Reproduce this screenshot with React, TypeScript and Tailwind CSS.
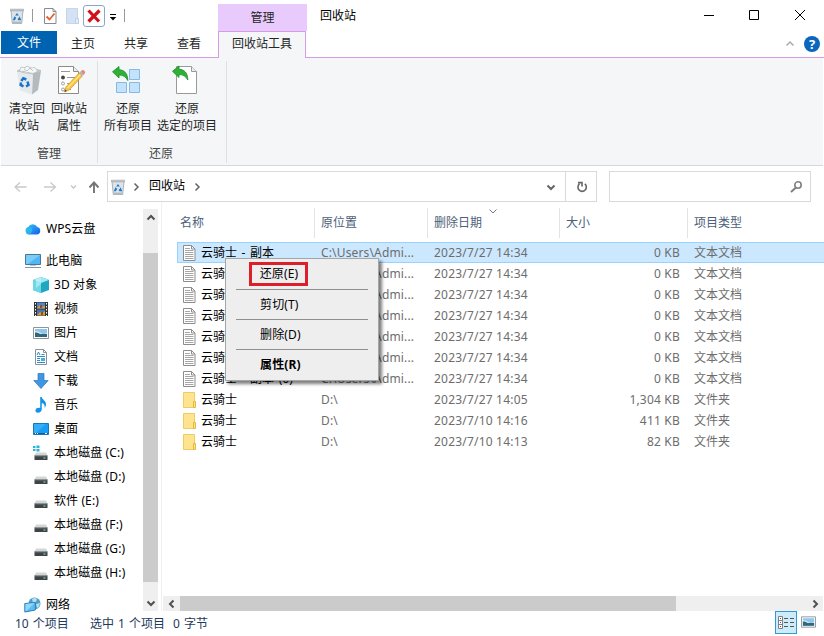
import type { ReactNode } from "react";
import clsx from "clsx";

interface FileItem {
  name: string;
  location: string;
  date: string;
  size: string;
  type: string;
  kind: "text" | "folder";
}

const textFile = (name: string): FileItem => ({
  name,
  location: "C:\\Users\\Admi...",
  date: "2023/7/27 14:34",
  size: "0 KB",
  type: "文本文档",
  kind: "text",
});

const folder = (date: string, size: string): FileItem => ({
  name: "云骑士",
  location: "D:\\",
  date,
  size,
  type: "文件夹",
  kind: "folder",
});

const files: FileItem[] = [
  textFile("云骑士 - 副本"),
  textFile("云骑士 - 副本 (2)"),
  textFile("云骑士 - 副本 (3)"),
  textFile("云骑士 - 副本 (4)"),
  textFile("云骑士 - 副本 (5)"),
  textFile("云骑士 - 副本 (7)"),
  textFile("云骑士 - 副本 (6)"),
  folder("2023/7/27 14:05", "1,304 KB"),
  folder("2023/7/10 14:16", "411 KB"),
  folder("2023/7/10 14:13", "82 KB"),
];

function BinIcon() {
  return (
    <svg width="16" height="16" viewBox="0 0 16 16">
      <path d="M2 2.500 3.300 15.500h9.400L14 2.500z" fill="#dde3e8" stroke="#9aa3aa" strokeWidth=".8" />
      <path d="M1.500 1.200h13v1.600h-13z" fill="#d3d9dd" stroke="#8f989f" strokeWidth=".6" />
      <path d="M3.200 13.500h9.600v2H3.300z" fill="#b3bbc1" />
      <path d="M6.200 7.600 8 5l1.800 2.600z" fill="#1b78c8" />
      <path d="m5.500 8.300 1.700 1.500-1.300 2.400H3.800z" fill="#1b78c8" />
      <path d="m10.500 8.300 1.800 3.900H9.500l-1-1.200 1.200-1z" fill="#1b78c8" />
    </svg>
  );
}

function FullBinIcon() {
  return (
    <svg width="26" height="30" viewBox="0 0 26 30" className="ml-[3px]">
      <path d="m1 6 16 3-1 20.500L4 25.500z" fill="#e6e9eb" />
      <path d="m17 9 8-3-3 19-6 4.500z" fill="#b4babe" />
      <path d="m1 6 9-4 15 3.500L17 9z" fill="#c9cdd0" stroke="#a6adb2" strokeWidth=".6" />
      <path d="m3.500 6 1.500-4 4 1 2-2 4 2 4-.5 1.500 2.500 2 1-5.500 2.500-5-1-3 .5z" fill="#f7f8f8" stroke="#b5babd" strokeWidth=".7" />
      <path d="m8 4 3 2 3-3 3 3M6 6l4 1" fill="none" stroke="#a4aaae" strokeWidth=".7" />
      <path
        d="m5.300 16 2-2.800 3 1.300M11.500 16.500l1 3.500-2.500 1.500M7.500 21.300l-2.800-1.300.2-2.500"
        fill="none"
        stroke="#1674d1"
        strokeWidth="2.500"
      />
    </svg>
  );
}

function PropertiesIcon() {
  return (
    <svg width="28" height="30" viewBox="0 0 28 30" className="ml-[5px]">
      <path d="M.5 1.500h15l5 5v22H.5z" fill="#fff" stroke="#8b8b8b" />
      <path d="M15.500 1.500v5h5" fill="#eee" stroke="#8b8b8b" />
      <path d="M3 6.500h9M9 12.500h8M9 18.500h6M9 24.500h4" stroke="#999" />
      <circle cx="5" cy="12.500" r="1.900" fill="#444" />
      <circle cx="5" cy="18.500" r="1.500" fill="#fff" stroke="#888" strokeWidth=".8" />
      <circle cx="5" cy="24.500" r="1.500" fill="#fff" stroke="#888" strokeWidth=".8" />
      <path d="m6.500 27 1.300-5L21 8l3.300 3-13 14z" fill="#f9c440" stroke="#d58a16" strokeWidth=".6" />
      <path d="M9.500 23 22.500 9.500" stroke="#ffe48a" strokeWidth="1.300" />
      <path d="m22.500 6.500 1.500-1.300q1.500-.7 2.800 1 .8 1.500-.1 2.500l-1.200 1.200z" fill="#e68a7e" />
      <path d="m21 8 1.500-1.500 3.200 3L24.300 11z" fill="#aeb4ba" />
      <path d="m6.500 27 .7-2.500 1.700 1.500z" fill="#444" />
    </svg>
  );
}

function GreenArrow() {
  return (
    <path
      d="M.5 5.800 7 .5v3.200c5.500.3 8.700 3.600 8.800 10.800-2-3.800-4.600-5.400-8.800-5.500v3z"
      fill="#2eb135"
      stroke="#178d24"
      strokeWidth=".8"
      strokeLinejoin="round"
    />
  );
}

function RestoreAllIcon() {
  return (
    <svg width="30" height="30" viewBox="0 0 30 30" className="-ml-[2px]">
      <g fill="#c3e2fb" stroke="#86bae3">
        <path d="M17.500 4.500h10v10h-10zM4.500 17.500h10v10h-10zM17.500 17.500h10v10h-10z" />
      </g>
      <g transform="translate(0 1)">
        <GreenArrow />
      </g>
    </svg>
  );
}

function RestoreSelectedIcon() {
  return (
    <svg width="28" height="30" viewBox="0 0 28 30" className="-ml-[3px]">
      <path d="M4.500 1.500h15l5 5v22h-20z" fill="#fff" stroke="#9a9a9a" />
      <path d="M19.500 1.500v5h5" fill="#eee" stroke="#9a9a9a" />
      <g transform="translate(0 .5)">
        <GreenArrow />
      </g>
    </svg>
  );
}

function TextFileIcon() {
  return (
    <svg width="13" height="16" viewBox="0 0 13 16">
      <path d="M.5.5h8l3.500 3.500v11.500H.5z" fill="#fff" stroke="#8c8c8c" />
      <path d="M8.500 .5V4H12" fill="none" stroke="#8c8c8c" />
      <path d="M2 3.500h5M2 5.500h8.500M2 7.500h8.500M2 9.500h8.500M2 11.500h8.500M2 13.500h8.500" stroke="#a6a6a6" />
    </svg>
  );
}

function FolderIcon() {
  return (
    <svg width="13" height="16" viewBox="0 0 13 16">
      <path d="M.5.5h11v15H.5z" fill="#ffe48f" stroke="#efcb62" />
      <path d="M10.500 9.500h2v6h-2z" fill="#ffe48f" stroke="#e4b93f" />
    </svg>
  );
}

function CloudIcon() {
  return (
    <svg width="16" height="16" viewBox="0 0 16 16">
      <defs>
        <linearGradient id="cloud" x1="0" y1="0" x2="1" y2="1">
          <stop offset="0" stopColor="#35c5f0" />
          <stop offset="1" stopColor="#155bf0" />
        </linearGradient>
      </defs>
      <path d="M4 13.500a3.800 3.800 0 0 1-.7-7.400A5 5 0 0 1 12.200 6a3.800 3.800 0 0 1-.4 7.500z" fill="url(#cloud)" />
      <path d="M1 8.500q2-3 5-2 2 1 1 4-1 3-3 3-4 0-3-5z" fill="#2ec3e6" opacity=".7" />
    </svg>
  );
}

function ComputerIcon() {
  return (
    <svg width="18" height="16" viewBox="0 0 18 16" className="-ml-px">
      <path d="M1.500 1.500h15v10h-15z" fill="#4fb7f5" stroke="#4b7792" />
      <path d="M2 2h14L4 11H2z" fill="#7bcdf9" />
      <path d="M6 12h6v1H6z" fill="#b9c5cc" />
      <path d="M1 14.500h16" stroke="#7d97a8" />
    </svg>
  );
}

function CubeIcon() {
  return (
    <svg width="16" height="16" viewBox="0 0 16 16">
      <path d="m0 3 8-3 8 3v10l-8 3-8-3z" fill="#1fa6c0" />
      <path d="m0 3 8-3 8 3-8 3z" fill="#9ce9f2" />
      <path d="m0 3 8 3v10l-8-3z" fill="#6fd6e4" />
      <path d="m3 2 5-2v7l-5 4z" fill="#caf5f7" opacity=".6" />
    </svg>
  );
}

function VideoIcon() {
  return (
    <svg width="16" height="16" viewBox="0 0 16 16">
      <path d="M1 1h14v14H1z" fill="#333" />
      <path d="M4 1.500h8v6H4z" fill="#5284c8" />
      <path d="M4 8.500h8v6H4z" fill="#4574b8" />
      <path d="m4 7 3-3 2 2 3-1v2.500H4zM4 14l3-3 2 1 3-2v4.500H4z" fill="#c9a233" />
      <path d="M7 4h2v3H7zM8 11h2v3H8z" fill="#a1433b" />
      <path d="M2.500 2v13M13.500 2v13" stroke="#fff" strokeDasharray="1.500 1.500" />
    </svg>
  );
}

function PictureIcon() {
  return (
    <svg width="16" height="12" viewBox="0 0 16 12">
      <path d="M.5.5h15v11H.5z" fill="#fff" stroke="#8e9599" />
      <path d="M2 2h12v8H2z" fill="#8fc6ef" />
      <path d="M2 4q4 0 6 2t6 0v2H2z" fill="#d6e9f1" />
      <path d="M2 5.500q3-.5 5 1.500h7v3H2z" fill="#356578" />
    </svg>
  );
}

function DocumentIcon() {
  return (
    <svg width="16" height="16" viewBox="0 0 16 16">
      <path d="M2.500.5h8l3 3v12h-11z" fill="#fff" stroke="#899096" />
      <path d="M10.500.5v3h3" fill="none" stroke="#899096" />
      <path d="m4 6 1.500-3L7 6M8.500 5.500h3M4 7.500h8M4 9.500h3M4 11.500h3M4 13.500h8" fill="none" stroke="#2b8ccb" />
      <path d="M8 9h4v3H8z" fill="#4eaadb" />
    </svg>
  );
}

function DownloadIcon() {
  return (
    <svg width="16" height="16" viewBox="0 0 16 16">
      <path d="M5 .5h6v7h4.200L8 15.500.8 7.500H5z" fill="#3f97e4" stroke="#2a76ba" strokeWidth=".7" />
    </svg>
  );
}

function MusicIcon() {
  return (
    <svg width="16" height="16" viewBox="0 0 16 16">
      <path
        d="M7.200 0h1.600c.2 2.700 4.700 3.800 4.200 8-.2 1.300-.7 2-1.500 2.800.8-3-1-4.300-2.700-4.900V12c0 2.300-1.800 3.800-3.700 3.800-2 0-3-1.300-2.600-2.800.5-1.800 2.700-2.700 4.700-2z"
        fill="#1693e8"
      />
    </svg>
  );
}

function DesktopIcon() {
  return (
    <svg width="16" height="12" viewBox="0 0 16 12">
      <path d="M.5.5h15v11H.5z" fill="#169df5" stroke="#1777b9" />
      <path d="M1 1h12L3 10H1z" fill="#35adf9" />
      <path d="M1 10.500h14" stroke="#125b9c" />
      <path d="M2 10.500h1M4 10.500h1M12 10.500h2" stroke="#fff" />
    </svg>
  );
}

function DriveIcon({ system = false }: { system?: boolean }) {
  return (
    <svg width="16" height="16" viewBox="0 0 16 16">
      <path d="m3 7.500-1.500 3h13l-1.500-3z" fill="#d3d6d7" />
      <path d="M1.500 10.500h13V15h-13z" fill="#3c4446" />
      <path d="M1.500 10.800h13" stroke="#8c9294" />
      <path d="M10.500 12.500h2v1h-2z" fill="#8fe6ae" />
      {system && <path d="M0 1h2.500v2H0zM3.500.5h3V3h-3zM0 4h2.500v2H0zM3.500 4h3v2.500h-3z" fill="#22b4dd" />}
    </svg>
  );
}

function NetworkIcon() {
  return (
    <svg width="17" height="16" viewBox="0 0 17 16" className="-ml-px">
      <circle cx="10.500" cy="6.500" r="6" fill="#4b9dcb" />
      <path d="M8 2q3-2 5 0l-1 3-3 1zM12 7l4-1-1 4-2 1z" fill="#b6dded" />
      <path d="m.8 6.500 10.500-1v7.500l-10.500 2z" fill="#5abdf3" stroke="#2a7eb8" />
      <path d="m1.500 7 9-1-8 8h-1z" fill="#91d7fb" />
    </svg>
  );
}

function Chevron({ dir, className }: { dir: "up" | "down" | "left" | "right"; className?: string }) {
  const paths = {
    up: "m1.500 6.500 3.500-3.500 3.500 3.500",
    down: "m1.500 3.500 3.500 3.500 3.500-3.500",
    left: "m6.500 1.500-3.500 3.500 3.500 3.500",
    right: "m3.500 1.500 3.500 3.500-3.500 3.500",
  };
  return (
    <svg width="10" height="10" viewBox="0 0 10 10" fill="none" stroke="currentColor" className={className}>
      <path d={paths[dir]} />
    </svg>
  );
}

function RibbonButton({ icon, lines, className }: { icon: ReactNode; lines: [string, string]; className: string }) {
  return (
    <button className={clsx("flex shrink-0 flex-col items-center whitespace-nowrap leading-[17px] text-[#262626]", className)}>
      <span className="flex h-[35px] items-start justify-center">{icon}</span>
      <span>{lines[0]}</span>
      <span>{lines[1]}</span>
    </button>
  );
}

function TitleBar() {
  return (
    <header className="flex h-[58px] shrink-0 border-b border-[#d59be6]">
      <div className="flex w-[218px] flex-col">
        <div className="flex h-[31px] items-center pl-[9px]">
          <BinIcon />
          <span className="ml-[7px] h-[13px] w-px bg-[#999]" />
          <svg width="13" height="16" viewBox="0 0 13 16" className="ml-[11px]">
            <path d="M.5.5h8.500l3 3v12H.5z" fill="#fff" stroke="#858b91" />
            <path d="M9 .5v3h3" fill="none" stroke="#858b91" />
            <path d="m2.500 8.500 3 3 5-6" fill="none" stroke="#e3622c" strokeWidth="1.800" />
          </svg>
          <svg width="13" height="16" viewBox="0 0 13 16" className="ml-[9px]">
            <path d="M.5.500h11v15H.5z" fill="#d4e2f4" stroke="#c4d5ec" />
            <path d="M9.500 10.500h3v5h-3z" fill="#e2ecf8" stroke="#bdd0ea" />
          </svg>
          <span className="ml-[4px] flex h-[22px] w-[22px] items-center justify-center rounded-[3px] border border-[#8ba6c6]">
            <svg width="14" height="14" viewBox="0 0 14 14">
              <path d="M1.500 1.500 12 12.500M12.500 1.500l-11 11" stroke="#d1101b" strokeWidth="3.200" />
            </svg>
          </span>
          <svg width="8" height="7" viewBox="0 0 8 7" className="mt-[3px] ml-[4px]">
            <path d="M1 .5h6" stroke="#000" />
            <path d="M.8 3h6.400L4 6.500z" />
          </svg>
          <span className="ml-[7px] h-[13px] w-px bg-[#999]" />
        </div>
        <nav className="flex h-[26px] items-start leading-[25px] text-[#262626]">
          <button className="ml-px h-[23px] w-14 bg-[#0063b1] leading-[24px] text-white">文件</button>
          <button className="ml-[14px]">主页</button>
          <button className="ml-[29px]">共享</button>
          <button className="ml-[29px]">查看</button>
        </nav>
      </div>
      <div className="w-[89px] pt-1 text-center text-[#262626]">
        <div className="h-[27px] bg-[#e9cafc] leading-[28px]">管理</div>
        <div className="h-[27px] w-[88px] border-x border-t border-[#d59be6] bg-[#f4f6f8] leading-[24px]">回收站工具</div>
      </div>
      <span className="ml-[13px] pt-[7px] leading-[17px] text-black">回收站</span>
      <div className="ml-auto flex w-[130px] flex-col">
        <svg width="110" height="31" viewBox="0 0 110 31" fill="none" stroke="#000" className="ml-[8px]">
          <path d="M2 15.500h10M47.500 10.500h9v9h-9zM93 10l10 10M103 10 93 20" />
        </svg>
        <div className="flex items-center justify-end pt-[5px] pr-[4px]">
          <Chevron dir="up" className="mr-[9px] stroke-[1.5] text-[#ababab]" />
          <span className="flex h-4 w-4 items-center justify-center rounded-full bg-[#0c66bd] text-[13px] leading-none font-bold text-white">
            ?
          </span>
        </div>
      </div>
    </header>
  );
}

function Ribbon() {
  return (
    <section className="mx-px flex h-[108px] shrink-0 border-b border-[#d5d7d9] bg-[#f4f6f8] pt-[3px]">
      <div className="flex h-[102px] w-[97px] flex-col justify-between border-r border-[#dddfe1] pb-px">
        <div className="flex pt-[4px] pl-[5px]">
          <RibbonButton className="w-[42px]" icon={<FullBinIcon />} lines={["清空回", "收站"]} />
          <RibbonButton className="w-[42px]" icon={<PropertiesIcon />} lines={["回收站", "属性"]} />
        </div>
        <div className="text-center leading-[16px] text-[#444]">管理</div>
      </div>
      <div className="flex h-[102px] w-[129px] flex-col justify-between border-r border-[#dddfe1] pb-px">
        <div className="flex pt-[4px] pl-[5px]">
          <RibbonButton className="w-[50px]" icon={<RestoreAllIcon />} lines={["还原", "所有项目"]} />
          <RibbonButton className="ml-[3px] w-[62px]" icon={<RestoreSelectedIcon />} lines={["还原", "选定的项目"]} />
        </div>
        <div className="pr-[2px] text-center leading-[16px] text-[#444]">还原</div>
      </div>
    </section>
  );
}

function AddressBar() {
  return (
    <div className="flex h-[36px] shrink-0 items-end">
      <div className="flex h-[31px] w-[107px] items-center pl-[13px]">
        <svg width="88" height="16" viewBox="0 0 88 16" fill="none">
          <path d="M2 8h11.500M7 3.500 2 8l5 4.500M31 8h11.500M37.500 3.500l5 4.500-5 4.500" stroke="#c9c9c9" strokeWidth="1.300" />
          <path d="m58 6.500 2.500 2.500L63 6.500" stroke="#c5c5c5" strokeWidth="1.300" />
          <path d="M81 14V3.500M76.500 8.500l4.500-5 4.500 5" stroke="#757575" strokeWidth="1.900" />
        </svg>
      </div>
      <div className="flex h-[31px] w-[490px] border border-[#d9d9d9]">
        <div className="flex flex-1 items-center pl-[2px]">
          <BinIcon />
          <Chevron dir="right" className="ml-[5px] stroke-[1.5] text-[#666]" />
          <span className="mr-[7px] ml-[8px] pb-px text-black">回收站</span>
          <Chevron dir="right" className="stroke-[1.5] text-[#666]" />
          <Chevron dir="down" className="mr-[9px] ml-auto stroke-2 text-[#666]" />
        </div>
        <div className="flex w-[31px] items-center justify-center border-l border-[#d9d9d9]">
          <svg width="12" height="12" viewBox="0 0 12 12" fill="none" stroke="#666" strokeWidth="1.600" className="ml-px">
            <path d="M8.800 2.900A4.200 4.200 0 1 1 3.500 2.900M2 1.600h4v3.900" />
          </svg>
        </div>
      </div>
      <div className="ml-[12px] flex h-[31px] w-[202px] items-center justify-end border border-[#d9d9d9] pr-[7px]">
        <svg width="13" height="13" viewBox="0 0 13 13" fill="none" stroke="#808080">
          <circle cx="8" cy="5" r="3.200" strokeWidth="1.600" />
          <path d="m6 7.500-5 4.500" strokeWidth="2" />
        </svg>
      </div>
    </div>
  );
}

function NavItem({ icon, label, nested, className }: { icon: ReactNode; label: string; nested?: boolean; className?: string }) {
  return (
    <li
      className={clsx(
        "flex h-6 shrink-0 items-center whitespace-nowrap tracking-[0.1px]",
        nested ? "pl-[33px]" : "pl-[25px]",
        className
      )}
    >
      <span className="flex w-[21px] shrink-0 items-center">{icon}</span>
      {label}
    </li>
  );
}

function Sidebar() {
  return (
    <>
      <ul className="flex w-[143px] shrink-0 flex-col pt-[15px] text-black">
        <NavItem icon={<CloudIcon />} label="WPS云盘" />
        <NavItem icon={<ComputerIcon />} label="此电脑" className="mt-2" />
        <NavItem nested icon={<CubeIcon />} label="3D 对象" />
        <NavItem nested icon={<VideoIcon />} label="视频" />
        <NavItem nested icon={<PictureIcon />} label="图片" />
        <NavItem nested icon={<DocumentIcon />} label="文档" />
        <NavItem nested icon={<DownloadIcon />} label="下载" />
        <NavItem nested icon={<MusicIcon />} label="音乐" />
        <NavItem nested icon={<DesktopIcon />} label="桌面" />
        <NavItem nested icon={<DriveIcon system />} label="本地磁盘 (C:)" />
        <NavItem nested icon={<DriveIcon />} label="本地磁盘 (D:)" />
        <NavItem nested icon={<DriveIcon />} label="软件 (E:)" />
        <NavItem nested icon={<DriveIcon />} label="本地磁盘 (F:)" />
        <NavItem nested icon={<DriveIcon />} label="本地磁盘 (G:)" />
        <NavItem nested icon={<DriveIcon />} label="本地磁盘 (H:)" />
        <NavItem icon={<NetworkIcon />} label="网络" className="mt-[8px]" />
      </ul>
      <div className="mt-[7px] flex w-[15px] shrink-0 flex-col items-center bg-[#efefef] text-[#505050]">
        <span className="flex h-[44px] pt-[4px]">
          <Chevron dir="up" className="stroke-2" />
        </span>
        <span className="h-[329px] w-full bg-[#cbcbcb]" />
        <span className="flex flex-1 items-end pb-[3px]">
          <Chevron dir="down" className="stroke-2" />
        </span>
      </div>
    </>
  );
}

function ContextMenu() {
  return (
    <div className="absolute top-[56px] left-[63px] h-[123px] w-[154px] border border-[#a5a5a5] bg-[#eeeeee] px-[10px] tracking-[0.15px] text-black shadow-[3px_3px_3px_rgba(0,0,0,0.5)]">
      <div className="flex h-[31px] items-center border-b border-[#909090] pl-[13px]">
        <span className="flex h-[24px] w-[59px] items-center justify-center border-[3px] border-[#dc1f2b] pl-px">还原(E)</span>
      </div>
      <div className="h-[30px] border-b border-[#909090] pl-[24px] leading-[29px]">剪切(T)</div>
      <div className="h-[30px] border-b border-[#909090] pl-[24px] leading-[29px]">删除(D)</div>
      <div className="h-[30px] pl-[24px] leading-[29px] font-bold">属性(R)</div>
    </div>
  );
}

function FileRow({ file, selected }: { file: FileItem; selected: boolean }) {
  return (
    <div
      className={clsx(
        "grid h-[21px] grid-cols-[138px_113px_140px_106px_1fr] items-center border pl-[5px] whitespace-nowrap text-[#6d6d6d]",
        selected ? "border-[#99d1ff] bg-[#cce8ff]" : "border-transparent"
      )}
    >
      <span className="flex items-center gap-[5px] text-black">
        {file.kind === "text" ? <TextFileIcon /> : <FolderIcon />}
        <span className="[word-spacing:1.5px]">{file.name}</span>
      </span>
      <span className="tracking-[0.15px]">{file.location}</span>
      <span className="tracking-[0.2px]">{file.date}</span>
      <span className="text-right tracking-[0.2px]">{file.size}</span>
      <span className="pl-[14px]">{file.type}</span>
    </div>
  );
}

function FileList() {
  return (
    <main className="relative ml-[3px] flex min-w-0 flex-1 flex-col border-l border-[#f0f0f0]">
      <div className="mt-[6px] ml-[18px] grid h-[28px] grid-cols-[135px_113px_132px_128px_1fr] leading-[30px] text-[#4c607a]">
        <span className="border-r border-[#e3e3e3]">名称</span>
        <span className="border-r border-[#e3e3e3] pl-[6px]">原位置</span>
        <span className="relative border-r border-[#e3e3e3] pl-[6px]">
          删除日期
          <Chevron dir="down" className="absolute -top-[2px] left-[60px] text-[#777]" />
        </span>
        <span className="border-r border-[#e3e3e3] pl-[6px]">大小</span>
        <span className="pl-[6px]">项目类型</span>
      </div>
      <div className="mt-[6px] -mr-px ml-[15px] flex-1">
        {files.map((file, idx) => (
          <FileRow key={idx} file={file} selected={idx === 0} />
        ))}
      </div>
      <div className="mr-px ml-[1px] flex h-[15px] items-center bg-[#efefef] text-[#505050]">
        <span className="flex w-[17px] justify-center">
          <Chevron dir="left" className="stroke-2" />
        </span>
        <span className="h-full w-[496px] bg-[#cbcbcb]" />
        <Chevron dir="right" className="mr-[3px] ml-auto stroke-2" />
      </div>
      <ContextMenu />
    </main>
  );
}

function StatusBar() {
  return (
    <footer className="flex h-[25px] shrink-0 items-start pl-[15px] leading-[25px] text-[#1e395b] [word-spacing:1px]">
      <span className="w-[75px]">10 个项目</span>
      <span className="w-[83px]">选中 1 个项目</span>
      <span>0 字节</span>
      <span className="ml-auto flex h-[23px] w-[22px] items-center justify-center border border-[#2f9bd1] bg-[#cdebf9]">
        <svg width="18" height="14" viewBox="0 0 18 14" fill="none" stroke="#7e8184">
          <path d="M1.500.500h4v12h-4zM1.500 4.500h4M1.500 8.500h4" fill="#fff" />
          <path d="M3 2.500h1M3 6.500h1M3 10.500h1M7 2.500h4M7 6.500h4M7 10.500h4M13 2.500h4M13 6.500h4M13 10.500h4" stroke="#555" />
        </svg>
      </span>
      <span className="mt-[5px] mr-[8px] ml-[4px] flex h-[12px] w-[15px]">
        <PictureIcon />
      </span>
    </footer>
  );
}

export default function App() {
  return (
    <div className="flex h-[636px] w-[824px] flex-col overflow-hidden bg-white font-['Noto_Sans','Noto_Sans_CJK_SC',sans-serif] text-[12px] select-none">
      <TitleBar />
      <Ribbon />
      <AddressBar />
      <div className="flex h-[409px] shrink-0">
        <Sidebar />
        <FileList />
      </div>
      <StatusBar />
    </div>
  );
}
